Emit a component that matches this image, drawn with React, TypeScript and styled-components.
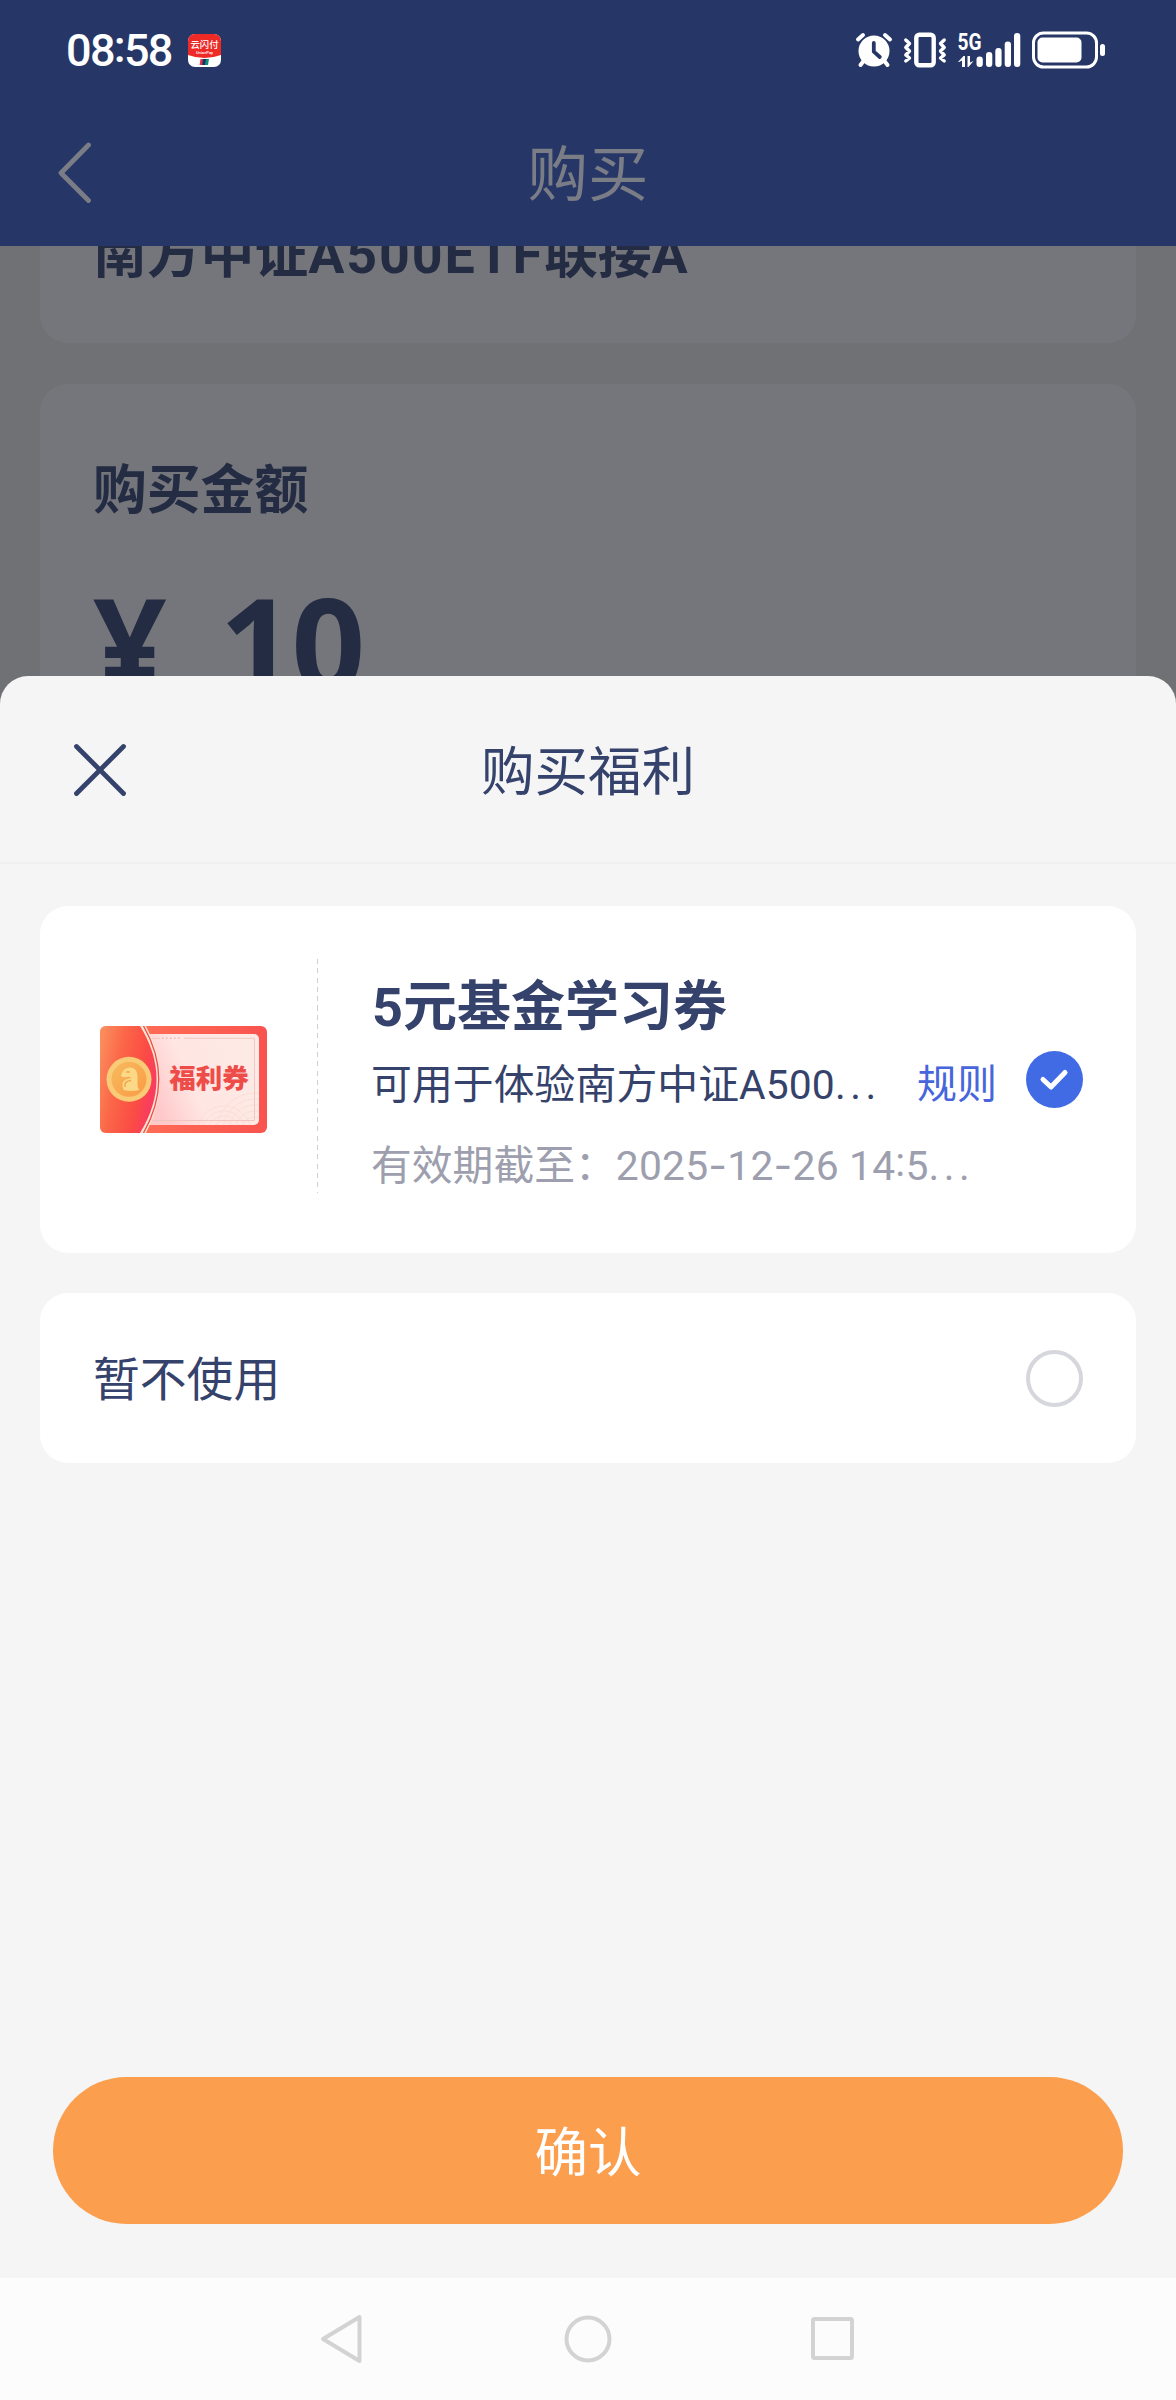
import React from "react";
import styled, { createGlobalStyle } from "styled-components";

const Global = createGlobalStyle`
  * { box-sizing: border-box; }
  body { margin: 0; background: #f5f5f5; }
  button { border: 0; padding: 0; background: none; font: inherit; color: inherit; display: block; }
  svg { display: block; flex: none; }
`;

const Screen = styled.div`
  width: 1176px;
  height: 2400px;
  display: flex;
  flex-direction: column;
  overflow: hidden;
  background: #707175;
  color: #35426b;
  font-family: Roboto, "Noto Sans CJK SC", sans-serif;
`;

const TopArea = styled.div`
  height: 246px;
  flex: none;
  background: #263767;
`;

const StatusBar = styled.div`
  height: 100px;
  padding: 0 71px 0 66px;
  display: flex;
  align-items: center;
  justify-content: space-between;
  color: #fff;
`;

const StatusGroup = styled.div<{ $gap: number }>`
  display: flex;
  align-items: center;
  gap: ${(p) => p.$gap}px;
`;

const Clock = styled.span`
  padding-top: 1px;
  font-size: 45px;
  line-height: 52px;
  font-weight: 500;
  letter-spacing: -1.7px;
`;

const Colon = styled.span`
  vertical-align: 4px;
  line-height: 1;
`;

const NavBar = styled.div`
  height: 146px;
  display: grid;
  grid-template-columns: 150px 1fr 150px;
  align-items: center;
  padding-bottom: 1px;
  color: #7a7c86;
`;

const BackButton = styled.button`
  padding-left: 57px;
`;

const NavTitle = styled.h1`
  margin: 0;
  padding-top: 6px;
  text-align: center;
  font-size: 60.5px;
  line-height: 80px;
  font-weight: 400;
`;

const Dimmed = styled.div`
  height: 430px;
  flex: none;
  padding: 0 40px;
  display: flex;
  flex-direction: column;
  gap: 41px;
  overflow: hidden;
  color: #242c43;
`;

const DimCard = styled.section<{ $first?: boolean }>`
  flex: none;
  height: ${(p) => (p.$first ? 97 : 400)}px;
  padding: ${(p) => (p.$first ? 0 : 68)}px 54px 0;
  border-radius: ${(p) => (p.$first ? "0 0 28px 28px" : "28px")};
  background: #75767b;
  overflow: hidden;
`;

const BoldLine = styled.h2<{ $pull?: number }>`
  margin: ${(p) => p.$pull ?? 0}px 0 0 -1px;
  font-size: 53.8px;
  line-height: 78px;
  font-weight: 700;
  white-space: nowrap;
`;

const Amount = styled.div`
  margin: 38px 0 0 -1px;
  display: flex;
  gap: 55px;
  font-family: "Noto Sans", sans-serif;
  font-size: 129px;
  line-height: 148px;
  font-weight: 700;
  letter-spacing: -2px;
`;

const Sheet = styled.section`
  height: 1602px;
  flex: none;
  border-radius: 28px 28px 0 0;
  background: #f5f5f5;
  display: flex;
  flex-direction: column;
`;

const SheetHeader = styled.header`
  height: 188px;
  flex: none;
  display: grid;
  grid-template-columns: 150px 1fr 150px;
  align-items: center;
  border-bottom: 2px solid #f0f0f1;
`;

const CloseButton = styled.button`
  padding: 2px 0 0 72px;
`;

const SheetTitle = styled.h2`
  margin: 0;
  padding-top: 7px;
  text-align: center;
  font-size: 53.5px;
  line-height: 78px;
  font-weight: 400;
`;

const Options = styled.div`
  flex: 1;
  padding: 42px 40px 0;
  display: flex;
  flex-direction: column;
  gap: 40px;
`;

const Option = styled.div<{ $height: number }>`
  height: ${(p) => p.$height}px;
  padding: 0 53px 0 54px;
  border-radius: 28px;
  background: #fff;
  display: flex;
  align-items: center;
`;

const Voucher = styled.div`
  width: 223px;
  padding-left: 6px;
  flex: none;
`;

const Divider = styled.div`
  width: 1px;
  height: 234px;
  margin-bottom: 8px;
  flex: none;
  background: repeating-linear-gradient(to bottom, #cfcfd1 0 5px, transparent 5px 9.3px);
`;

const Info = styled.div`
  flex: 1;
  min-width: 0;
  padding: 6px 0 0 54px;
`;

const InfoTitle = styled.h3`
  margin: 0;
  font-size: 54px;
  line-height: 78px;
  font-weight: 700;
`;

const InfoRow = styled.div`
  display: flex;
  align-items: center;
  justify-content: space-between;
  margin: 0 29px 0 -1px;
`;

const InfoText = styled.p<{ $muted?: boolean }>`
  margin: ${(p) => (p.$muted ? "21px 0 0 -1px" : "8px 0 0")};
  font-size: 40.8px;
  line-height: 60px;
  white-space: nowrap;
  color: ${(p) => (p.$muted ? "#9d9fae" : "#35426b")};
`;

const Spread = styled.span<{ $ls: number }>`
  letter-spacing: ${(p) => p.$ls}px;
`;

const Hyphen = styled.span`
  font-family: Inter, sans-serif;
  line-height: 1;
`;

const RuleLink = styled.a`
  margin-top: 7px;
  font-size: 40px;
  line-height: 60px;
  color: #4766dc;
`;

const OptionLabel = styled.span`
  flex: 1;
  margin-left: -1px;
  padding-top: 3px;
  font-size: 46.8px;
  line-height: 68px;
`;

const Ring = styled.span`
  width: 57px;
  height: 57px;
  margin-top: 1px;
  border-radius: 50%;
  border: 4px solid #d6d7dc;
`;

const Footer = styled.div`
  padding: 0 53px 54px;
`;

const Confirm = styled.button`
  width: 100%;
  height: 147px;
  padding-top: 6px;
  border-radius: 74px;
  background: #fb9e4e;
  color: #fff;
  font-size: 53.5px;
  line-height: 78px;
  text-align: center;
`;

const SystemNav = styled.nav`
  height: 122px;
  flex: none;
  background: #fcfcfc;
  display: flex;
  justify-content: center;
  align-items: center;
  gap: 193px;
`;

const AppIcon = () => (
  <svg width="33" height="33" viewBox="0 0 33 33">
    <defs>
      <clipPath id="appClip"><rect width="33" height="33" rx="7" /></clipPath>
    </defs>
    <g clipPath="url(#appClip)">
      <rect width="33" height="33" fill="#fff" />
      <path d="M0 0H33V21Q16.500 27 0 21Z" fill="#ee2a26" />
      <text x="16.500" y="14" fontSize="9.300" fontWeight="500" fill="#fff" textAnchor="middle">云闪付</text>
      <text x="16.500" y="19.500" fontSize="4" fontWeight="500" fill="#fff" textAnchor="middle">UnionPay</text>
      <path d="M12.500 25h3l-1 6h-3z" fill="#e0314f" />
      <path d="M15 25h3.500l-1 6h-3.500z" fill="#12345e" />
      <path d="M18 25h3l-1 6h-3z" fill="#0b8a80" />
    </g>
  </svg>
);

const StatusIcons = () => (
  <svg width="250" height="40" viewBox="855 29.500 250 40" fill="#fff" stroke="none">
    <circle cx="874" cy="50.500" r="15.500" />
    <g stroke="#fff" strokeWidth="4" strokeLinecap="round" fill="none">
      <path d="M858 39l5-4.500M890 39l-5-4.500M864 60l-3.500 4.500M884 60l3.500 4.500" />
    </g>
    <path d="M873.800 42.500v8.700l6 5.300" fill="none" stroke="#263767" strokeWidth="3.800" strokeLinecap="round" strokeLinejoin="round" />
    <rect x="916.300" y="34.300" width="17.400" height="30.400" rx="3" fill="none" stroke="#fff" strokeWidth="4.400" />
    <path d="M905.800 39.500l3.700 3.500-3.700 4 3.700 3.500-3.700 4 3.700 3-3.700 3M944.200 39.500l-3.700 3.500 3.700 4-3.700 3.500 3.700 4-3.700 3 3.700 3" fill="none" stroke="#fff" strokeWidth="3.400" strokeLinecap="round" strokeLinejoin="round" />
    <text x="957.500" y="49.500" fontSize="23" fontWeight="700" textLength="24" lengthAdjust="spacingAndGlyphs">5G</text>
    <path d="M958 61.500l5.500-6h1.500v11h-3v-6.500l-3 1.500zM967.500 55.500h2.500v6.500l3.500-1.500-5 6h-1z" />
    <rect x="976.500" y="56" width="6.300" height="10.500" rx="3" />
    <rect x="986" y="51.500" width="6.300" height="15" rx="3" />
    <rect x="995.300" y="47.500" width="6.300" height="19" rx="3" />
    <rect x="1004.700" y="41" width="6.300" height="25.500" rx="3" />
    <rect x="1014" y="32.500" width="6.300" height="34" rx="3" />
    <rect x="1033.500" y="32.500" width="63" height="34" rx="10" fill="none" stroke="#fff" strokeWidth="3" />
    <rect x="1037.500" y="37" width="44" height="25" rx="5" />
    <rect x="1100" y="43.500" width="5" height="12" rx="2.500" />
  </svg>
);

const VoucherArt = () => (
  <svg width="167" height="107" viewBox="0 0 167 107">
    <defs>
      <clipPath id="ticket"><rect width="167" height="107" rx="6" /></clipPath>
      <clipPath id="inner"><rect x="30" y="8" width="129" height="91" rx="5" /></clipPath>
      <linearGradient id="frame" x1="0" y1="0" x2="1" y2="0">
        <stop offset="0.300" stopColor="#ff6a55" />
        <stop offset="1" stopColor="#f9534f" />
      </linearGradient>
      <linearGradient id="left" x1="0" y1="0.250" x2="0.950" y2="0.600">
        <stop offset="0" stopColor="#fb8a5c" />
        <stop offset="0.350" stopColor="#fb6648" />
        <stop offset="0.750" stopColor="#fb4c44" />
        <stop offset="1" stopColor="#f93c60" />
      </linearGradient>
      <linearGradient id="paper" x1="0" y1="0.600" x2="1" y2="0.300">
        <stop offset="0.150" stopColor="#ffc9ca" />
        <stop offset="0.450" stopColor="#ffe6e3" />
        <stop offset="1" stopColor="#fdeae5" />
      </linearGradient>
      <linearGradient id="coin" x1="0" y1="0" x2="1" y2="1">
        <stop offset="0" stopColor="#f6bb5d" />
        <stop offset="1" stopColor="#fb9b46" />
      </linearGradient>
    </defs>
    <g clipPath="url(#ticket)">
      <rect width="167" height="107" fill="url(#frame)" />
      <g clipPath="url(#inner)">
        <rect x="30" y="8" width="129" height="91" fill="url(#paper)" />
        <g clipPath="url(#inner)" fill="none" stroke="#f9dcd6" strokeWidth="0.900">
          {[12, 17, 22, 27].map((r) => <circle key={r} cx="124" cy="107" r={r} />)}
          {[14, 20, 26, 32, 38].map((r) => <circle key={r} cx="155" cy="105" r={r} />)}
        </g>
      </g>
      <path d="M52 12.300H60M84 12.300H154.500V94.500H50" fill="none" stroke="#efc3be" strokeWidth="0.900" />
      <path d="M62 12.300H82" stroke="#efb5b0" strokeWidth="1.600" strokeDasharray="1.500 2.500" />
      <path d="M0 0H46Q74 53 46 107H0Z" fill="#fde3d2" />
      <path d="M0 0H40Q73 53 40 107H0Z" fill="url(#left)" />
      <path d="M43.500 0Q74 53 43.500 107" fill="none" stroke="#e94f48" strokeWidth="1.300" />
      <circle cx="29" cy="53.300" r="22.500" fill="#f9cb77" />
      <circle cx="29" cy="53.300" r="17.500" fill="url(#coin)" />
      <path d="M21 50c1-5 4-8.500 9-8.500 5 0 7.500 4 7.500 9v8q0 4 2 5.500-8 2-15.500 0-1.500-2-1.500-5 0-5 5-6l4-1q-2-2-5-1-3 1-5.500-1z" fill="#fbd987" />
      <path d="M25 61q-1-6 6-6.500M26 46h4" fill="none" stroke="#f3a74c" strokeWidth="1.500" />
      <text x="109" y="62" textAnchor="middle" fontSize="26.500" fontWeight="900" fill="#ee4c49">福利券</text>
    </g>
  </svg>
);

export default function App() {
  return (
    <Screen>
      <Global />
      <TopArea>
        <StatusBar>
          <StatusGroup $gap={16}>
            <Clock>08<Colon>:</Colon>58</Clock>
            <AppIcon />
          </StatusGroup>
          <StatusIcons />
        </StatusBar>
        <NavBar>
          <BackButton aria-label="返回">
            <svg width="36" height="62" viewBox="0 0 36 62" fill="none" stroke="currentColor" strokeWidth="4.800" strokeLinecap="round" strokeLinejoin="round">
              <path d="M31.500 3L4 31L31.500 58.500" />
            </svg>
          </BackButton>
          <NavTitle>购买</NavTitle>
        </NavBar>
      </TopArea>

      <Dimmed>
        <DimCard $first>
          <BoldLine $pull={-30}>南方中证<Spread $ls={1.9}>A500ETF</Spread>联接A</BoldLine>
        </DimCard>
        <DimCard>
          <BoldLine>购买金额</BoldLine>
          <Amount>
            <span>¥</span>
            <span>10</span>
          </Amount>
        </DimCard>
      </Dimmed>

      <Sheet>
        <SheetHeader>
          <CloseButton aria-label="关闭">
            <svg width="56" height="56" viewBox="0 0 56 56" stroke="currentColor" strokeWidth="4.800" strokeLinecap="round">
              <path d="M4.500 4.500L51.500 51.500M51.500 4.500L4.500 51.500" />
            </svg>
          </CloseButton>
          <SheetTitle>购买福利</SheetTitle>
        </SheetHeader>

        <Options>
          <Option $height={347}>
            <Voucher><VoucherArt /></Voucher>
            <Divider />
            <Info>
              <InfoTitle>5元基金学习券</InfoTitle>
              <InfoRow>
                <InfoText><Spread $ls={0.1}>可用于体验南方中证A500</Spread><Spread $ls={4.5}>...</Spread></InfoText>
                <RuleLink>规则</RuleLink>
              </InfoRow>
              <InfoText $muted>
                有效期截至：<Spread $ls={0.2}>2025<Hyphen>-</Hyphen>12<Hyphen>-</Hyphen>26 14<Colon>:</Colon>5</Spread><Spread $ls={4.5}>...</Spread>
              </InfoText>
            </Info>
            <svg width="57" height="57" viewBox="0 0 57 57" fill="none">
              <circle cx="28.500" cy="28.500" r="28.500" fill="#416be4" />
              <path d="M17 28.500L25 36L39 21.500" stroke="#fff" strokeWidth="5" strokeLinecap="round" strokeLinejoin="round" />
            </svg>
          </Option>
          <Option $height={170}>
            <OptionLabel>暂不使用</OptionLabel>
            <Ring />
          </Option>
        </Options>

        <Footer>
          <Confirm>确认</Confirm>
        </Footer>
      </Sheet>

      <SystemNav>
        <svg width="52" height="52" viewBox="0 0 52 52" fill="none" stroke="#d3d3d3" strokeWidth="4" strokeLinejoin="round">
          <path d="M42.500 4V48L6 26Z" />
        </svg>
        <svg width="52" height="52" viewBox="0 0 52 52" fill="none" stroke="#d3d3d3" strokeWidth="4">
          <circle cx="26" cy="26" r="21.500" />
        </svg>
        <svg width="52" height="52" viewBox="0 0 52 52" fill="none" stroke="#d3d3d3" strokeWidth="4">
          <rect x="6" y="6" width="39" height="39" rx="1.500" />
        </svg>
      </SystemNav>
    </Screen>
  );
}
